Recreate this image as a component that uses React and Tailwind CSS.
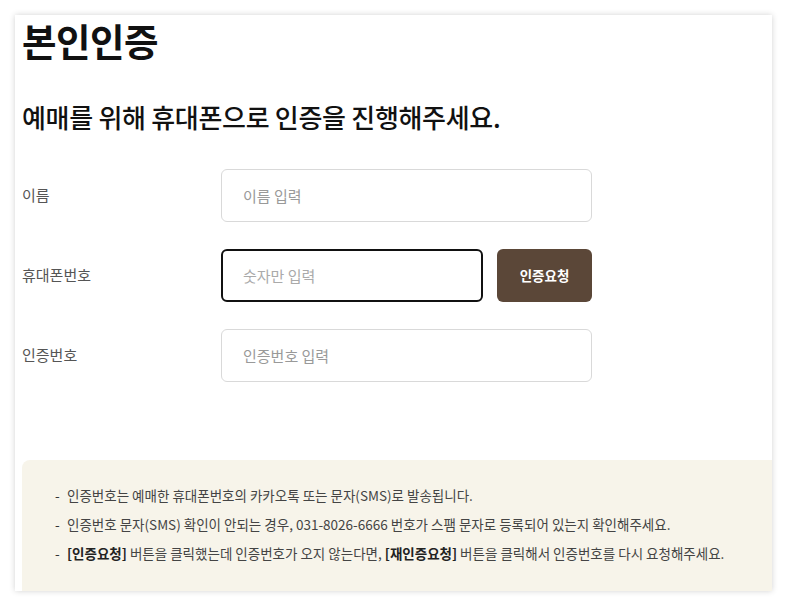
export default function App() {
  const font = { fontFamily: '"Noto Sans CJK KR", "Noto Sans", sans-serif' };
  return (
    <div className="w-[787px] h-[606px] bg-white pt-[15px] pl-[15px]" style={font}>
      <div className="w-[757px] h-[576px] bg-white shadow-[0_0_6px_rgba(0,0,0,0.18)] flex flex-col">
        <div className="pl-[7px]">
          <h1 className="text-[37.5px] font-bold leading-[50px] text-[#111] tracking-[-0.5px]">본인인증</h1>
          <h2 className="mt-[35px] text-[26px] font-medium leading-[34px] text-[#111] tracking-[-0.3px]">
            예매를 위해 휴대폰으로 인증을 진행해주세요.
          </h2>

          <div className="mt-[35px] flex flex-col gap-[27px]">
            <Row label="이름">
              <input
                placeholder="이름 입력"
                className="w-[371px] h-[53px] rounded-[6px] border border-[#d9d9d9] px-[21px] text-[15px] placeholder:text-[#999] outline-none"
              />
            </Row>
            <Row label="휴대폰번호">
              <input
                placeholder="숫자만 입력"
                className="w-[262px] h-[53px] rounded-[6px] border-2 border-[#111] px-[20px] text-[15px] placeholder:text-[#aaa] outline-none"
              />
              <button className="ml-[14px] w-[95px] h-[53px] rounded-[6px] bg-[#5b4738] text-white text-[13.5px] font-bold">
                인증요청
              </button>
            </Row>
            <Row label="인증번호">
              <input
                placeholder="인증번호 입력"
                className="w-[371px] h-[53px] rounded-[6px] border border-[#d9d9d9] px-[21px] text-[15px] placeholder:text-[#999] outline-none"
              />
            </Row>
          </div>
        </div>

        <div className="mt-auto ml-[7px] h-[131px] bg-[#f7f4ea] rounded-tl-[8px] pl-[33px] pt-[25px] text-[13.5px] text-[#444] flex flex-col gap-[9px] leading-[20px]">
          <Note>인증번호는 예매한 휴대폰번호의 카카오톡 또는 문자(SMS)로 발송됩니다.</Note>
          <Note>인증번호 문자(SMS) 확인이 안되는 경우, 031-8026-6666 번호가 스팸 문자로 등록되어 있는지 확인해주세요.</Note>
          <Note>
            <b className="text-[#222]">[인증요청]</b> 버튼을 클릭했는데 인증번호가 오지 않는다면,{" "}
            <b className="text-[#222]">[재인증요청]</b> 버튼을 클릭해서 인증번호를 다시 요청해주세요.
          </Note>
        </div>
      </div>
    </div>
  );
}

function Row({ label, children }) {
  return (
    <div className="flex items-center h-[53px]">
      <span className="w-[199px] text-[15px] text-[#555]">{label}</span>
      {children}
    </div>
  );
}

function Note({ children }) {
  return (
    <div className="flex">
      <span className="w-[12px] text-[#333]">-</span>
      <span>{children}</span>
    </div>
  );
}
